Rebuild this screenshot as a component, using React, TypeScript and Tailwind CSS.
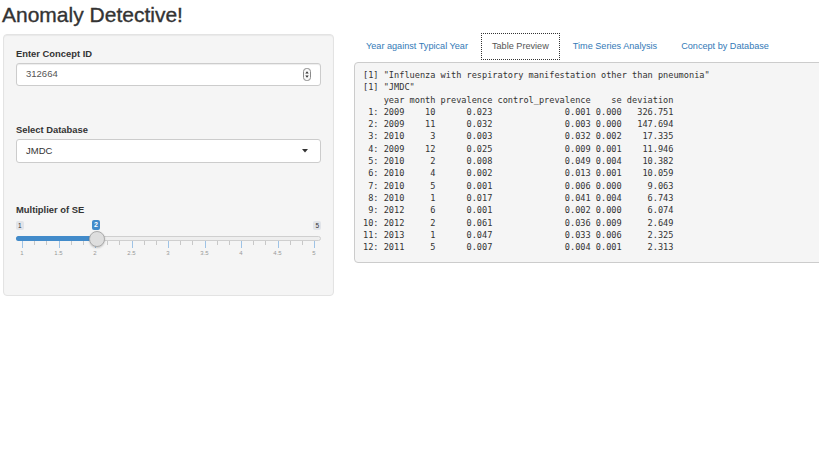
import React from "react";

const rows = [
  "[1] \"Influenza with respiratory manifestation other than pneumonia\"",
  "[1] \"JMDC\"",
  "    year month prevalence control_prevalence    se deviation",
  " 1: 2009    10      0.023              0.001 0.000   326.751",
  " 2: 2009    11      0.032              0.003 0.000   147.694",
  " 3: 2010     3      0.003              0.032 0.002    17.335",
  " 4: 2009    12      0.025              0.009 0.001    11.946",
  " 5: 2010     2      0.008              0.049 0.004    10.382",
  " 6: 2010     4      0.002              0.013 0.001    10.059",
  " 7: 2010     5      0.001              0.006 0.000     9.063",
  " 8: 2010     1      0.017              0.041 0.004     6.743",
  " 9: 2012     6      0.001              0.002 0.000     6.074",
  "10: 2012     2      0.061              0.036 0.009     2.649",
  "11: 2013     1      0.047              0.033 0.006     2.325",
  "12: 2011     5      0.007              0.004 0.001     2.313",
];

const tickLabels = ["1", "1.5", "2", "2.5", "3", "3.5", "4", "4.5", "5"];
const cells = Array.from({ length: 24 }, (_, i) => i);

function Slider() {
  return (
    <div className="w-[305px] pt-[5px]">
      {/* min / value / max labels */}
      <div className="relative flex justify-between h-[9px]">
        <span className="px-[2px] rounded-[2px] bg-[#e1e4e9] text-[6.5px] leading-[9px] text-[#333]">1</span>
        <span className="absolute left-[76px] -top-[1px] h-[10px] w-[8px] rounded-[2px] bg-[#428bca] text-center text-[7px] font-bold leading-[10px] text-white">
          2
        </span>
        <span className="px-[2px] rounded-[2px] bg-[#e1e4e9] text-[6.5px] leading-[9px] text-[#333]">5</span>
      </div>
      {/* track */}
      <div className="relative mt-[6px] h-[5px] rounded-full border border-[#cfcfcf] bg-[#eeeeee]">
        <div className="absolute -left-px -top-px h-[5px] w-[81px] rounded-l-full bg-[#428bca]" />
        <div className="absolute left-[72px] -top-[6px] h-[16px] w-[16px] rounded-full border border-[#ababab] bg-[#dedede] shadow-[0_1px_2px_rgba(0,0,0,0.2)]" />
      </div>
      {/* ticks */}
      <div className="flex mx-[6px] h-[7px]">
        {cells.map((i) => (
          <div key={i} className="flex-1">
            <div className={i % 3 === 0 ? "w-px h-[7px] bg-[#9ec3e6]" : "w-px h-[4px] bg-[#c8c8c8]"} />
          </div>
        ))}
        <div className="w-px h-[7px] bg-[#9ec3e6]" />
      </div>
      {/* tick labels */}
      <div className="flex mx-[6px] mt-px">
        {tickLabels.slice(0, 8).map((l) => (
          <div key={l} className="flex-1 text-[6px] leading-[8px] text-[#999]">
            <span className="inline-block -translate-x-1/2">{l}</span>
          </div>
        ))}
        <div className="w-px text-[6px] leading-[8px] text-[#999]">
          <span className="inline-block -translate-x-1/2">5</span>
        </div>
      </div>
    </div>
  );
}

function Tab({ label, active }: { label: string; active?: boolean }) {
  return (
    <div
      className={
        active
          ? "h-[27px] flex items-center px-[10px] mr-[2px] text-[#555] border border-dotted border-[#333]"
          : "h-[27px] flex items-center px-[10px] mr-[2px] text-[#337ab7] border border-transparent"
      }
    >
      {label}
    </div>
  );
}

export default function App() {
  return (
    <div
      className="w-[819px] h-[460px] bg-white overflow-hidden text-[#333]"
      style={{ fontFamily: '"Liberation Sans", Arial, sans-serif' }}
    >
      <h2 className="pl-[2px] pt-[3px] text-[21px] leading-[23px] font-medium text-[#333] [-webkit-text-stroke:0.35px_#333]">
        Anomaly Detective!
      </h2>
      <div className="flex items-start mt-[7px]">
        {/* sidebar */}
        <div className="ml-[3px] mt-[1px] w-[331px] h-[262px] rounded-[4px] border border-[#e3e3e3] bg-[#f5f5f5] shadow-[inset_0_1px_1px_rgba(0,0,0,0.05)] px-[12px] pt-[12px]">
          <div className="text-[9.4px] leading-[13px] font-bold">Enter Concept ID</div>
          <div className="mt-[3px] h-[23px] flex items-center justify-between rounded-[3px] border border-[#cccccc] bg-white pl-[9px] pr-[9px] shadow-[inset_0_1px_1px_rgba(0,0,0,0.075)]">
            <span className="text-[9.5px] text-[#555]">312664</span>
            <svg width="8" height="13" viewBox="0 0 8 13">
              <rect x="0.5" y="0.5" width="7" height="12" rx="3" fill="#f8f8f8" stroke="#8a8a8a" />
              <path d="M2.3 5.4 L4 3.2 L5.7 5.4 Z" fill="#333" />
              <path d="M2.3 7.6 L4 9.8 L5.7 7.6 Z" fill="#333" />
            </svg>
          </div>
          <div className="mt-[37px] text-[9.4px] leading-[13px] font-bold">Select Database</div>
          <div className="mt-[3px] h-[24px] flex items-center justify-between rounded-[3px] border border-[#cccccc] bg-white pl-[9px] pr-[12px]">
            <span className="text-[9.5px] text-[#333]">JMDC</span>
            <svg width="6" height="4" viewBox="0 0 6 4">
              <path d="M0 0 L6 0 L3 3.5 Z" fill="#333" />
            </svg>
          </div>
          <div className="mt-[40px] text-[9.4px] leading-[13px] font-bold">Multiplier of SE</div>
          <Slider />
        </div>

        {/* main */}
        <div className="ml-[20px] flex-1 min-w-0">
          <div className="flex pl-[1px] text-[9.15px]">
            <Tab label="Year against Typical Year" />
            <Tab label="Table Preview" active />
            <Tab label="Time Series Analysis" />
            <Tab label="Concept by Database" />
          </div>
          <pre
            className="mt-[2px] w-[480px] h-[201px] rounded-[4px] border border-[#cccccc] bg-[#f5f5f5] pl-[8px] pt-[6px] text-[8.6px] leading-[12.3px] text-[#333] whitespace-pre"
            style={{ fontFamily: '"DejaVu Sans Mono", "Liberation Mono", monospace' }}
          >
            {rows.join("\n")}
          </pre>
        </div>
      </div>
    </div>
  );
}
